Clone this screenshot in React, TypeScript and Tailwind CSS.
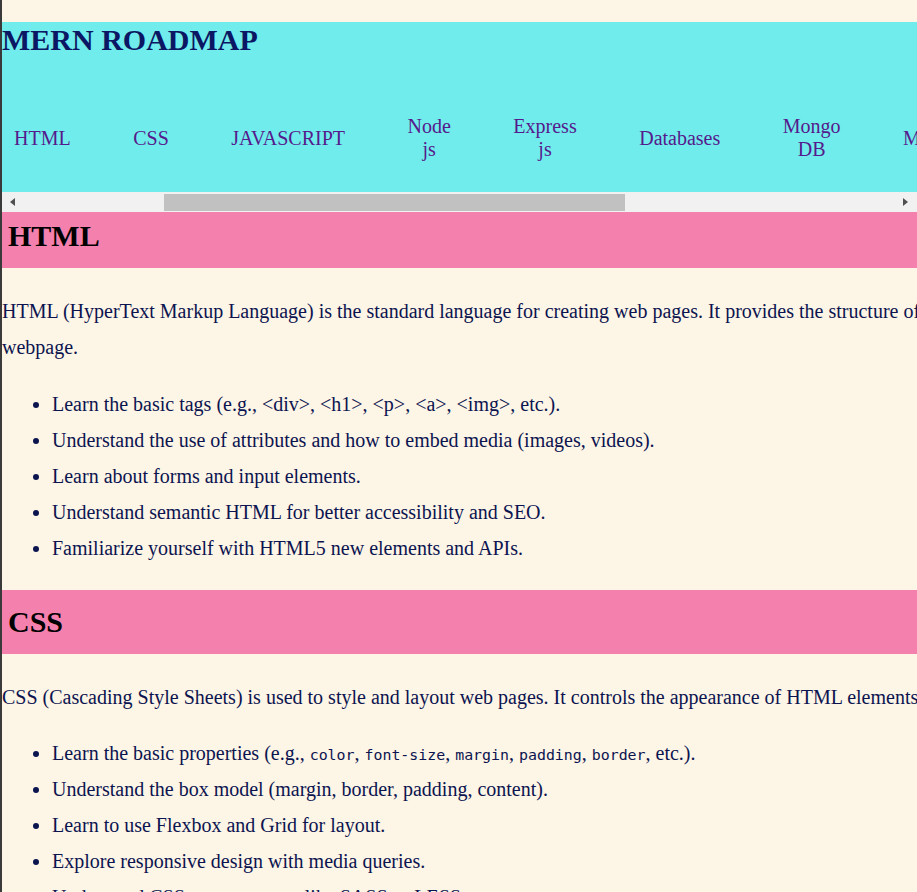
const topics = ['HTML', 'CSS', 'JAVASCRIPT', 'Node js', 'Express js', 'Databases', 'Mongo DB', 'Mongoose'];

const sections = [
  {
    title: 'HTML',
    intro:
      'HTML (HyperText Markup Language) is the standard language for creating web pages. It provides the structure of a webpage.',
    items: [
      <>Learn the basic tags (e.g., &lt;div&gt;, &lt;h1&gt;, &lt;p&gt;, &lt;a&gt;, &lt;img&gt;, etc.).</>,
      <>Understand the use of attributes and how to embed media (images, videos).</>,
      <>Learn about forms and input elements.</>,
      <>Understand semantic HTML for better accessibility and SEO.</>,
      <>Familiarize yourself with HTML5 new elements and APIs.</>,
    ],
  },
  {
    title: 'CSS',
    intro:
      'CSS (Cascading Style Sheets) is used to style and layout web pages. It controls the appearance of HTML elements.',
    items: [
      <>
        Learn the basic properties (e.g., <Code>color</Code>, <Code>font-size</Code>, <Code>margin</Code>,{' '}
        <Code>padding</Code>, <Code>border</Code>, etc.).
      </>,
      <>Understand the box model (margin, border, padding, content).</>,
      <>Learn to use Flexbox and Grid for layout.</>,
      <>Explore responsive design with media queries.</>,
      <>Understand CSS preprocessors like SASS or LESS.</>,
    ],
  },
];

function Code({ children }: { children: string }) {
  return <code className="font-['DejaVu_Sans_Mono',monospace] text-[14.9px] leading-none">{children}</code>;
}

function Arrow({ dir }: { dir: 'left' | 'right' }) {
  return (
    <div className={dir === 'left' ? 'w-[20px] flex items-center justify-center' : 'w-[23px] flex items-center justify-center'}>
      <svg width="5" height="8" viewBox="0 0 5 8">
        <polygon points={dir === 'left' ? '5,0 5,8 0,4' : '0,0 0,8 5,4'} fill="#505050" />
      </svg>
    </div>
  );
}

export default function App() {
  return (
    <div className="h-screen overflow-hidden bg-[#fdf5e6] border-l-2 border-[#3a3a3a] font-['Liberation_Serif',serif]">
      <div className="h-[22px]" />
      <header className="relative z-10 bg-[#70ecec]">
        <h1 className="text-[30px] leading-[35px] font-bold text-[#0b1763]">MERN ROADMAP</h1>
        <nav className="mt-[27px] h-[108px] flex items-center gap-[38.5px] overflow-hidden">
          {topics.map((t) => (
            <a key={t} className="px-3 w-min shrink-0 text-center text-[20px] leading-[23px] text-[#551a8b]">
              {t}
            </a>
          ))}
        </nav>
        <div className="h-[20px] flex bg-[#f1f1f1]">
          <Arrow dir="left" />
          <div className="flex-1 pt-[2px]">
            <div className="ml-[142px] w-[461px] h-[17px] bg-[#c1c1c1]" />
          </div>
          <Arrow dir="right" />
        </div>
      </header>
      <main className="w-[960px] -mt-2 text-[#0c1450]">
        {sections.map((s) => (
          <section key={s.title}>
            <h2 className="bg-[#f480ae] pl-[6px] pt-[14px] pb-[15px] text-[30px] leading-[35px] font-bold text-black mb-[25px]">
              {s.title}
            </h2>
            <p className="text-[20px] leading-[36px]">{s.intro}</p>
            <ul className="list-disc pl-[50px] mt-[20.5px] mb-[24px] text-[20px] leading-[36px]">
              {s.items.map((it, i) => (
                <li key={i}>{it}</li>
              ))}
            </ul>
          </section>
        ))}
      </main>
    </div>
  );
}
